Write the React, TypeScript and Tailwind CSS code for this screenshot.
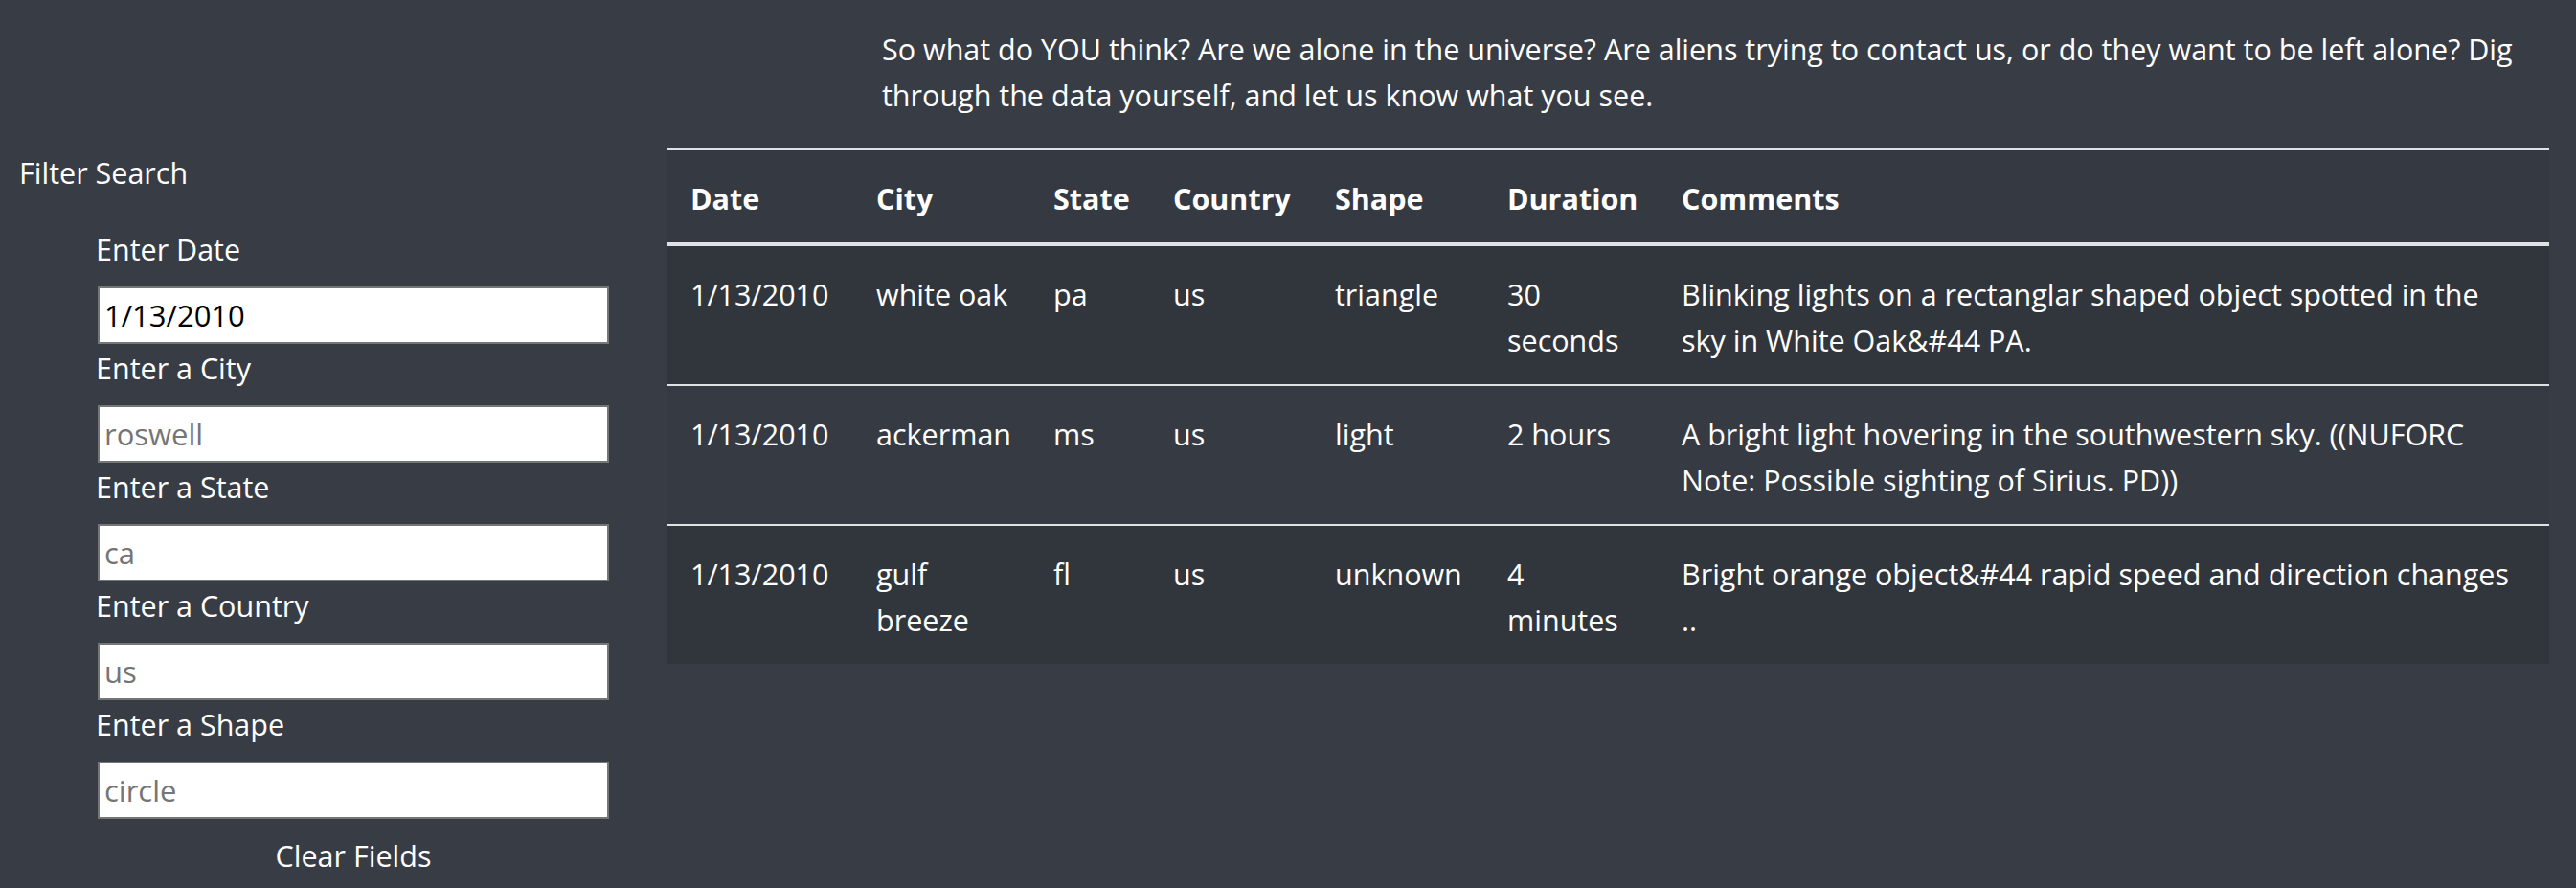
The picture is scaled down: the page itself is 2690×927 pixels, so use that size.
import React from "react";

const rows = [
  {
    date: "1/13/2010",
    city: ["white oak"],
    state: "pa",
    country: "us",
    shape: "triangle",
    duration: ["30", "seconds"],
    comments: ["Blinking lights on a rectanglar shaped object spotted in the", "sky in White Oak&#44 PA."],
  },
  {
    date: "1/13/2010",
    city: ["ackerman"],
    state: "ms",
    country: "us",
    shape: "light",
    duration: ["2 hours"],
    comments: ["A bright light hovering in the southwestern sky. ((NUFORC", "Note: Possible sighting of Sirius. PD))"],
  },
  {
    date: "1/13/2010",
    city: ["gulf", "breeze"],
    state: "fl",
    country: "us",
    shape: "unknown",
    duration: ["4", "minutes"],
    comments: ["Bright orange object&#44 rapid speed and direction changes", ".."],
  },
];

const fields = [
  { label: "Enter Date", value: "1/13/2010", placeholder: "" },
  { label: "Enter a City", value: "", placeholder: "roswell" },
  { label: "Enter a State", value: "", placeholder: "ca" },
  { label: "Enter a Country", value: "", placeholder: "us" },
  { label: "Enter a Shape", value: "", placeholder: "circle" },
];

function Lines({ parts }: { parts: string[] }) {
  return (
    <>
      {parts.map((p, i) => (
        <React.Fragment key={i}>
          {i > 0 && <br />}
          {p}
        </React.Fragment>
      ))}
    </>
  );
}

export default function App() {
  const th = "pl-[24px] pr-[24px] pt-[26px] pb-[22px] text-left align-top font-bold whitespace-nowrap";
  const td = "pl-[24px] pr-[24px] pt-[26px] pb-[22px] text-left align-top whitespace-nowrap";
  return (
    <div className="min-h-[927px] w-full overflow-hidden bg-[#383c44] text-white font-['Open_Sans',sans-serif] text-[30.5px] leading-[48px]">
      <div className="flex">
        {/* Sidebar */}
        <aside className="w-[697px] shrink-0 pt-[156px]">
          <div className="pl-[20px] h-[48px]">Filter Search</div>
          <form className="ml-[100px] mt-[31px] w-[540px] flex flex-col" onSubmit={(e) => e.preventDefault()}>
            {fields.map((f) => (
              <React.Fragment key={f.label}>
                <label className="block mt-[1px] mb-[15px] h-[48px]">{f.label}</label>
                <input
                  className="ml-[2px] w-[534px] h-[60px] border-2 border-[#767676] bg-white pl-[5px] text-[31px] text-black placeholder:text-[#757575] font-['Open_Sans',sans-serif] outline-none"
                  defaultValue={f.value}
                  placeholder={f.placeholder}
                />
              </React.Fragment>
            ))}
            <button type="button" className="ml-[2px] mt-[14px] w-[534px] h-[48px] text-center text-white leading-[48px]">
              Clear Fields
            </button>
          </form>
        </aside>

        {/* Main */}
        <main className="w-[1965px] shrink-0">
          <p className="ml-[224px] pt-[27px] mb-[32px] whitespace-nowrap">
            So what do YOU think? Are we alone in the universe? Are aliens trying to contact us, or do they want to be left alone? Dig
            <br />
            through the data yourself, and let us know what you see.
          </p>
          <table className="w-[1965px] table-fixed border-collapse bg-[#353941]">
            <colgroup>
              <col className="w-[194px]" />
              <col className="w-[185px]" />
              <col className="w-[125px]" />
              <col className="w-[169px]" />
              <col className="w-[180px]" />
              <col className="w-[182px]" />
              <col />
            </colgroup>
            <thead>
              <tr className="border-t-2 border-b-4 border-[#dee2e6]">
                <th className={th}>Date</th>
                <th className={th}>City</th>
                <th className={th}>State</th>
                <th className={th}>Country</th>
                <th className={th}>Shape</th>
                <th className={th}>Duration</th>
                <th className={th}>Comments</th>
              </tr>
            </thead>
            <tbody>
              {rows.map((r, i) => (
                <tr
                  key={i}
                  className={
                    (i % 2 === 0 ? "bg-[#31353c]" : "bg-[#363a42]") +
                    (i < rows.length - 1 ? " border-b-2 border-[#dee2e6]" : "")
                  }
                >
                  <td className={td}>{r.date}</td>
                  <td className={td}>
                    <Lines parts={r.city} />
                  </td>
                  <td className={td}>{r.state}</td>
                  <td className={td}>{r.country}</td>
                  <td className={td}>{r.shape}</td>
                  <td className={td}>
                    <Lines parts={r.duration} />
                  </td>
                  <td className={td}>
                    <Lines parts={r.comments} />
                  </td>
                </tr>
              ))}
            </tbody>
          </table>
        </main>
      </div>
    </div>
  );
}
